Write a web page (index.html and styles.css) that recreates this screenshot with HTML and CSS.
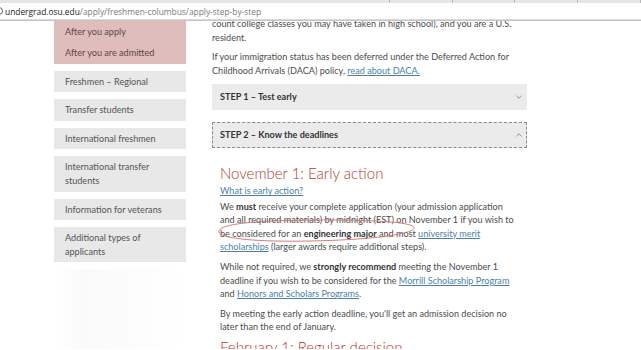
FILE: index.html
```html
<!DOCTYPE html>
<html lang="en">
<head>
<meta charset="utf-8">
<title>Apply step-by-step</title>
<link rel="stylesheet" href="styles.css">
</head>
<body>
<header class="chrome">
  <div class="tabs">
    <div class="tab tab-wide"></div>
    <div class="tab"></div>
    <div class="tab"></div>
    <div class="tab"></div>
    <div class="tab"></div>
    <div class="tab tab-last"></div>
  </div>
  <div class="addr">
    <span class="info-ico"></span>
    <span class="host">undergrad.osu.edu</span><span class="path">/apply/freshmen-columbus/apply-step-by-step</span>
  </div>
</header>
<div class="viewport">
  <div class="page">
    <aside class="side">
      <nav class="group-active">
        <a class="side-link" href="#">After you apply</a>
        <a class="side-link" href="#">After you are admitted</a>
      </nav>
      <a class="side-item" href="#">Freshmen – Regional</a>
      <a class="side-item" href="#">Transfer students</a>
      <a class="side-item" href="#">International freshmen</a>
      <a class="side-item" href="#">International transfer students</a>
      <a class="side-item" href="#">Information for veterans</a>
      <a class="side-item" href="#">Additional types of applicants</a>
      <div class="side-ghost"></div>
    </aside>
    <main class="content">
      <p>count college classes you may have taken in high school), and you are a U.S. resident.</p>
      <p>If your immigration status has been deferred under the Deferred Action for Childhood Arrivals (DACA) policy, <a href="#">read about DACA.</a></p>

      <div class="step">
        <span>STEP 1 – Test early</span>
        <svg class="chev" viewBox="0 0 6 4" width="6" height="4"><path d="M0.5 0.8 L3 3.2 L5.5 0.8" fill="none" stroke="#888" stroke-width="0.9"/></svg>
      </div>
      <div class="step step-open">
        <span>STEP 2 – Know the deadlines</span>
        <svg class="chev" viewBox="0 0 6 4" width="6" height="4"><path d="M0.5 3.2 L3 0.8 L5.5 3.2" fill="none" stroke="#888" stroke-width="0.9"/></svg>
      </div>

      <section class="panel">
        <h2>November 1: Early action</h2>
        <a class="block-link" href="#">What is early action?</a>
        <div class="annotated">
          <p>We <strong>must</strong> receive your complete application (your admission application and all required materials) by midnight (EST) on November 1 if you wish to be considered for an <strong>engineering major</strong> and most <a href="#">university merit scholarships</a> (larger awards require additional steps).</p>
          <svg class="circle-mark" viewBox="0 0 210 30" width="210" height="30"><path d="M4 17 C2 9, 40 5, 110 5 C170 5, 200 8, 199 13 C197 20, 150 25, 95 26 C45 27, 6 24, 4 17 Z" fill="none" stroke="#d46b6b" stroke-width="0.9"/></svg>
        </div>
        <p>While not required, we <strong>strongly recommend</strong> meeting the November 1 deadline if you wish to be considered for the <a href="#">Morrill Scholarship Program</a> and <a href="#">Honors and Scholars Programs</a>.</p>
        <p>By meeting the early action deadline, you'll get an admission decision no later than the end of January.</p>
        <h2 class="next">February 1: Regular decision</h2>
      </section>
    </main>
  </div>
</div>
</body>
</html>
```
FILE: styles.css
```css
* { box-sizing: border-box; }
html, body { margin: 0; padding: 0; background: #fff; }
body {
  width: 641px;
  height: 350px;
  overflow: hidden;
  font-family: "Lato", "Open Sans", sans-serif;
  color: #4d4d4d;
}

/* browser chrome */
.chrome { height: 21px; border-bottom: 1px solid #c4c4c4; background: #fff; }
.tabs { display: flex; height: 3px; background: #e6e6e6; }
.tab { width: 66px; border-right: 1px solid #b9b9b9; }
.tab-wide { width: 410px; }
.tab-last { flex: 1; border-right: 0; }
.addr {
  display: flex;
  align-items: center;
  height: 17px;
  padding-left: 5px;
  font-family: "Open Sans", sans-serif;
  font-size: 8.4px;
  position: relative;
  border-bottom: 1px solid #dadada;
}
.info-ico {
  position: absolute;
  left: -5px;
  top: 4px;
  width: 8px;
  height: 8px;
  border: 1px solid #666;
  border-radius: 50%;
}
.host { color: #1a1a1a; }
.path { color: #7a7a7a; }

/* page */
.viewport { height: 328px; overflow: hidden; }
.page {
  display: flex;
  gap: 26px;
  margin-top: -4px;
  padding-left: 54px;
}

.side { width: 132px; display: flex; flex-direction: column; gap: 7px; }
.group-active { background: #dfbdbd; padding-top: 3.5px; display: flex; flex-direction: column; }
.side-link, .side-item {
  display: block;
  padding: 4px 11px;
  font-size: 9.1px;
  line-height: 13.6px;
  text-decoration: none;
}
.side-link { color: #5e4747; }
.side-item { background: #e8e8e8; color: #555; }
.side-ghost { margin: 0 4px 0 3px; height: 100px; background: linear-gradient(90deg, #fff 0, #fafafa 20%, #fcfcfc 60%, #fff 100%); }

.content { width: 315px; font-size: 9.1px; line-height: 13.55px; }
.content p { margin: 0 0 6.3px; }
.content a { color: #4d7fa8; text-decoration: underline; }
.content strong { color: #333; font-weight: 700; }

.step {
  display: flex;
  align-items: center;
  justify-content: space-between;
  height: 26.7px;
  margin-top: 5.5px;
  padding: 0 5px 0 8px;
  background: #ebebeb;
  font-weight: 700;
  color: #333;
}
.step-open {
  margin-top: 11.3px;
  border: 1px dashed #8a8a8a;
  padding-left: 7px;
  padding-right: 4px;
}
.chev { display: block; }

.panel { padding: 0 8px; }
.panel h2 {
  margin: 15px 0 1px;
  font-size: 15px;
  line-height: 20px;
  font-weight: 300;
  color: #b5392c;
}
.panel h2.next { margin-top: -3px; }
.block-link { display: block; margin: 1px 0 1.5px; }
.annotated { position: relative; }
.circle-mark { position: absolute; left: -5px; top: 15.2px; }
```
